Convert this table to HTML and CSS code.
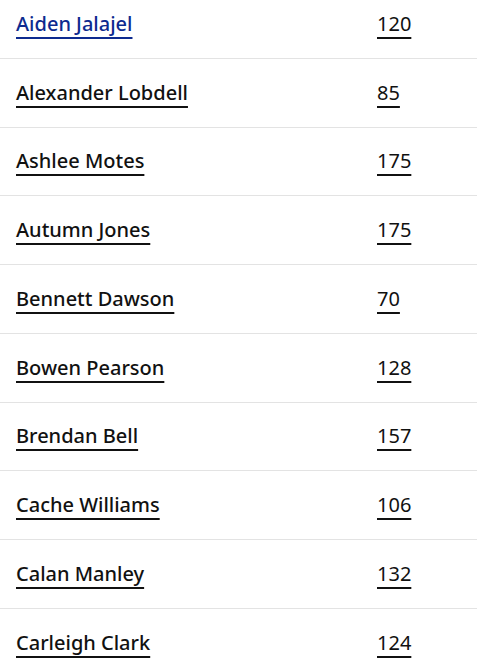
FILE: index.html
```html
<!DOCTYPE html>
<html>
<head>
<meta charset="utf-8">
<link rel="stylesheet" href="styles.css">
</head>
<body>
<div class="list">
  <div class="row"><a class="name current" href="#">Aiden Jalajel</a><a class="num" href="#">120</a></div>
  <div class="row"><a class="name" href="#">Alexander Lobdell</a><a class="num" href="#">85</a></div>
  <div class="row"><a class="name" href="#">Ashlee Motes</a><a class="num" href="#">175</a></div>
  <div class="row"><a class="name" href="#">Autumn Jones</a><a class="num" href="#">175</a></div>
  <div class="row"><a class="name" href="#">Bennett Dawson</a><a class="num" href="#">70</a></div>
  <div class="row"><a class="name" href="#">Bowen Pearson</a><a class="num" href="#">128</a></div>
  <div class="row"><a class="name" href="#">Brendan Bell</a><a class="num" href="#">157</a></div>
  <div class="row"><a class="name" href="#">Cache Williams</a><a class="num" href="#">106</a></div>
  <div class="row"><a class="name" href="#">Calan Manley</a><a class="num" href="#">132</a></div>
  <div class="row"><a class="name" href="#">Carleigh Clark</a><a class="num" href="#">124</a></div>
</div>
</body>
</html>
```
FILE: styles.css
```css
html, body {
  margin: 0;
  padding: 0;
  background: #fff;
}
body {
  font-family: "Noto Sans", Roboto, sans-serif;
  overflow: hidden;
}
.list {
  margin-top: -10px;
}
.row {
  display: grid;
  grid-template-columns: 361px 1fr;
  align-items: center;
  height: 67.75px;
  padding: 0 16px;
  border-bottom: 1px solid #e3e3e3;
  box-sizing: content-box;
}
.row a {
  color: #111;
  font-size: 20px;
  line-height: 24px;
  text-decoration: underline;
  text-decoration-thickness: 2px;
  text-underline-offset: 6px;
  justify-self: start;
}
.name {
  font-weight: 500;
}
.num {
  font-weight: 400;
}
.name.current {
  color: #0d2a8f;
}
```
